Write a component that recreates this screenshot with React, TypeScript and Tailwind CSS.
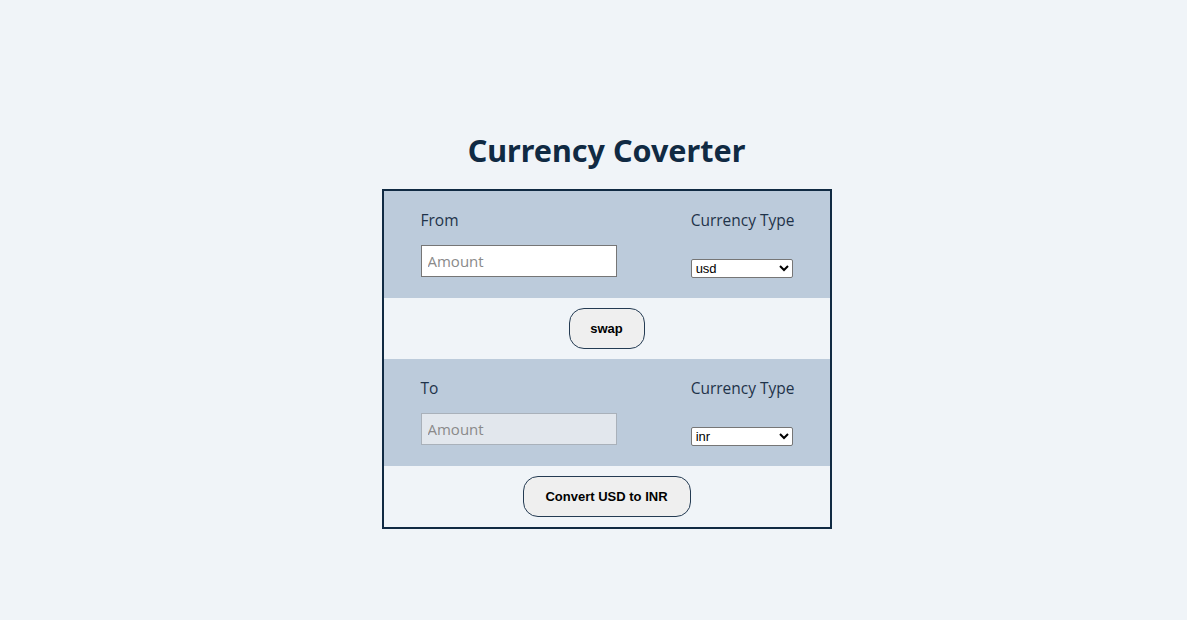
import React from "react";

function Section({ label, currency, disabled }: { label: string; currency: string; disabled?: boolean }) {
  return (
    <div className="bg-[#bccbdb] flex justify-between pl-[37px] pr-[35px] pt-[18px] pb-[20px] h-[107px]">
      <div className="flex flex-col">
        <label className="font-['Open_Sans',sans-serif] text-[15.5px] leading-[22px] text-[#1f334a]">{label}</label>
        <input
          placeholder="Amount"
          disabled={disabled}
          className={
            disabled
              ? "mt-[14px] w-[196px] h-[32px] bg-[#e2e7ed] border border-[#a9b1ba] px-[6px] font-['Open_Sans',sans-serif] text-[15px] placeholder:text-[#8a8a8a] outline-none"
              : "mt-[14px] w-[196px] h-[32px] bg-white border border-[#767676] px-[6px] font-['Open_Sans',sans-serif] text-[15px] text-[#243b53] placeholder:text-[#8a8a8a] outline-none"
          }
        />
      </div>
      <div className="flex flex-col justify-between">
        <label className="font-['Open_Sans',sans-serif] text-[15.5px] leading-[22px] text-[#1f334a]">Currency Type</label>
        <select
          className="w-[102px] h-[19px] bg-white border border-[#767676] rounded-[2px] font-['Liberation_Sans',Arial,sans-serif] text-[13px] text-black"
          defaultValue={currency}
        >
          <option value="usd">usd</option>
          <option value="inr">inr</option>
        </select>
      </div>
    </div>
  );
}

export default function App() {
  return (
    <div className="min-h-[620px] w-full bg-[#f0f4f8] flex flex-col items-center pl-[26px] pt-[128px] font-['Noto_Sans',sans-serif]">
      <h1 className="text-[30.5px] leading-[44px] font-bold text-[#102a43] mb-[17px] font-['Noto_Sans',sans-serif]">
        Currency Coverter
      </h1>
      <div className="w-[450px] border-2 border-[#102a43] flex flex-col">
        <Section label="From" currency="usd" />
        <div className="h-[61px] flex items-center justify-center">
          <button className="w-[76px] h-[41px] rounded-[15px] border border-[#243b53] bg-[#efefef] font-['Liberation_Sans',Arial,sans-serif] text-[13px] font-bold text-black">
            swap
          </button>
        </div>
        <Section label="To" currency="inr" disabled />
        <div className="h-[61px] flex items-center justify-center">
          <button className="w-[168px] h-[41px] rounded-[15px] border border-[#243b53] bg-[#efefef] font-['Liberation_Sans',Arial,sans-serif] text-[13px] font-bold text-black">
            Convert USD to INR
          </button>
        </div>
      </div>
    </div>
  );
}
